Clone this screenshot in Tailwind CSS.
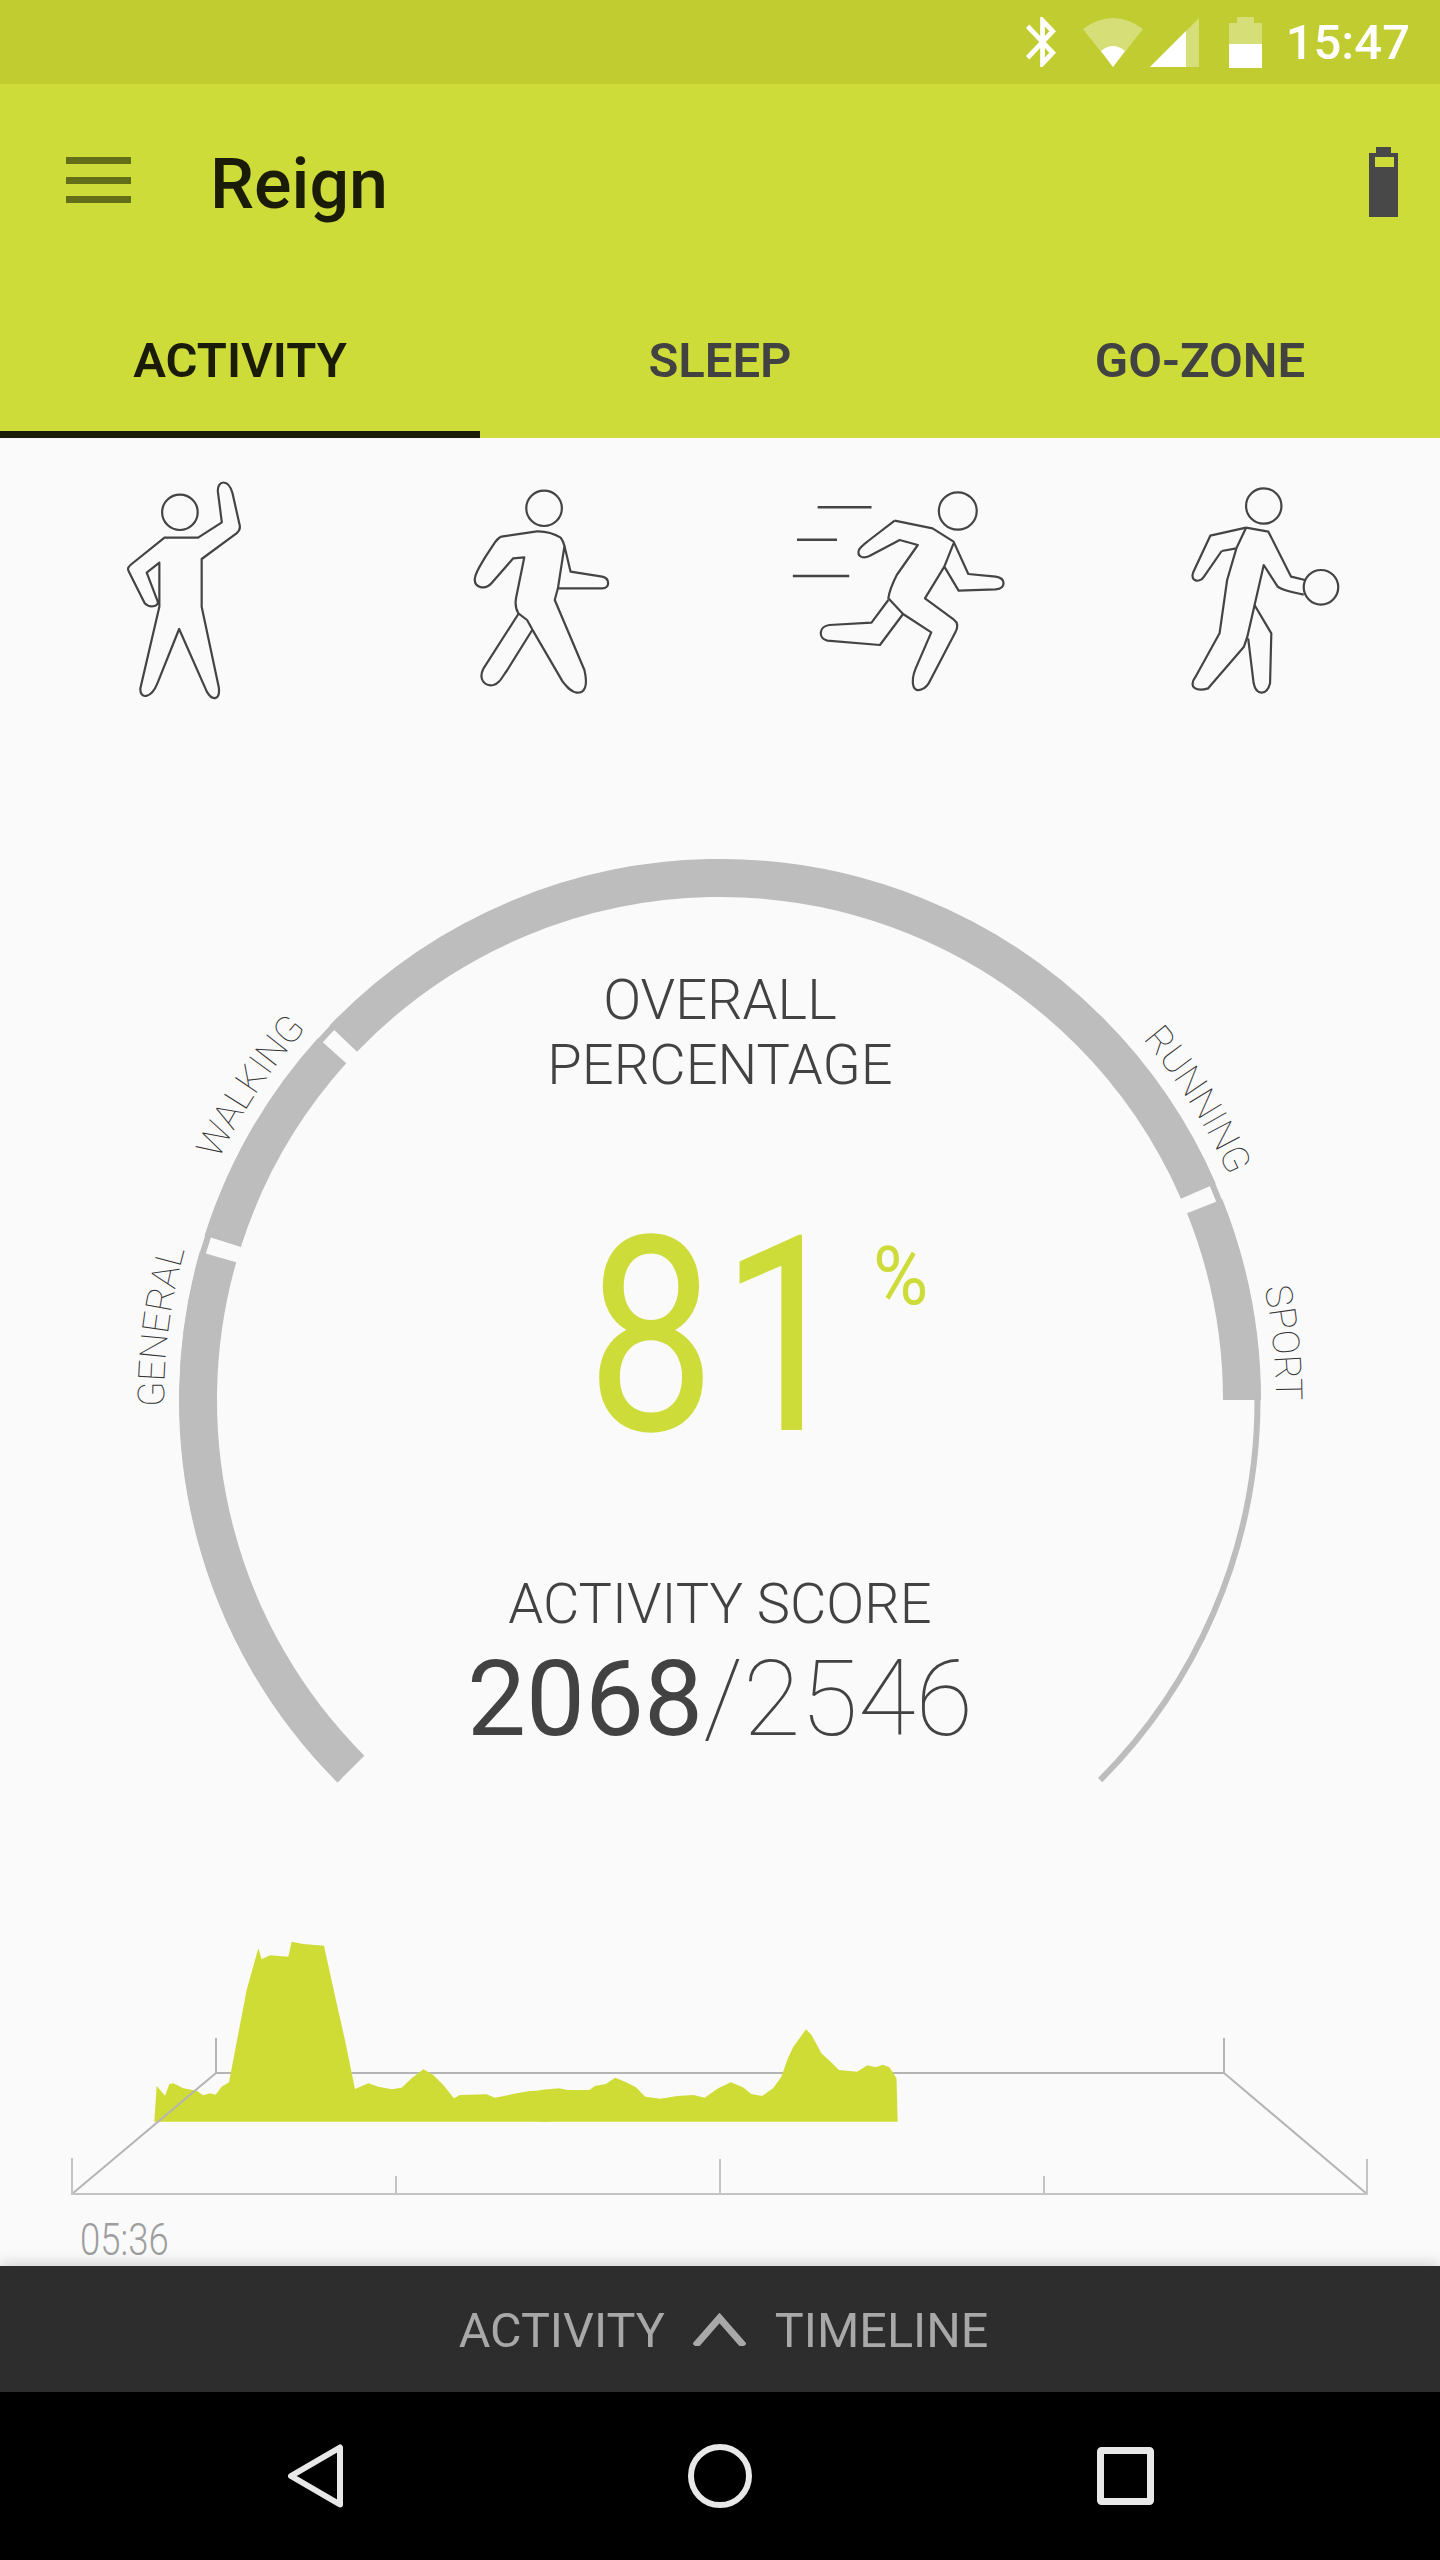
<!DOCTYPE html>
<html lang="en">
  <head>
    <meta charset="UTF-8" />
    <meta name="viewport" content="width=device-width, initial-scale=1.0" />
    <script src="https://cdn.jsdelivr.net/npm/@tailwindcss/browser@4"></script>
    <title>Reign</title>
  </head>
  <body class="bg-[#fafafa] font-['Roboto',sans-serif]">
    <div class="flex flex-col w-[1440px] h-[2560px] overflow-hidden">
      <!-- status bar -->
      <div class="h-[84px] bg-[#c1cc31] flex items-center justify-end pr-[30px] text-white">
        <svg class="w-[30px] h-[50px] fill-white" viewBox="5 2 12.71 20" preserveAspectRatio="none">
          <path d="M17.71 7.71L12 2h-1v7.59L6.41 5 5 6.41 10.59 12 5 17.59 6.41 19 11 14.41V22h1l5.71-5.71-4.3-4.29 4.3-4.29zM13 5.83l1.88 1.88L13 9.59V5.83zm1.88 10.46L13 18.17v-3.76l1.88 1.88z" />
        </svg>
        <svg class="w-[60px] h-[49px] ml-[27px]" viewBox="0 0 60 49">
          <path d="M30 49L0 11Q30 -11 60 11Z" fill="#fff" fill-opacity="0.35" />
          <path d="M30 49L18 33Q30 23 42 33Z" fill="#fff" />
        </svg>
        <svg class="w-[49px] h-[49px] ml-[7px]" viewBox="0 0 49 49">
          <path d="M49 0V49H0Z" fill="#fff" fill-opacity="0.35" />
          <path d="M0 49L36 13V49Z" fill="#fff" />
        </svg>
        <svg class="w-[33px] h-[51px] ml-[30px]" viewBox="0 0 33 51">
          <path d="M8 0H25V6H33V27H0V6H8Z" fill="#fff" fill-opacity="0.35" />
          <rect y="27" width="33" height="24" fill="#fff" />
        </svg>
        <span class="ml-[24px] text-[49px] leading-none font-medium">15:47</span>
      </div>

      <!-- toolbar -->
      <div class="h-[200px] bg-[#cddc39] flex items-center pl-[66px] pr-[42px]">
        <div class="w-[65px] h-[46px] mb-[8px] flex flex-col justify-between">
          <div class="h-[7px] bg-[#636e18]"></div>
          <div class="h-[7px] bg-[#636e18]"></div>
          <div class="h-[7px] bg-[#636e18]"></div>
        </div>
        <span class="ml-[79px] text-[70px] leading-none font-medium text-[#1b1c08]">Reign</span>
        <svg class="ml-auto mb-[4px] w-[29px] h-[70px]" viewBox="0 0 29 70">
          <path d="M7 0H22V6H29V70H0V6H7Z" fill="#484848" />
          <rect x="6" y="10" width="19" height="10" fill="#cddc39" />
        </svg>
      </div>

      <!-- tabs -->
      <div class="h-[154px] bg-[#cddc39] grid grid-cols-3 text-[49px] font-semibold">
        <div class="flex items-center justify-center pt-[7px] border-b-[7px] border-[#1a1c08] text-[#1a1c08]">ACTIVITY</div>
        <div class="flex items-center justify-center pt-[7px] border-b-[7px] border-transparent text-[#424242]">SLEEP</div>
        <div class="flex items-center justify-center pt-[7px] border-b-[7px] border-transparent text-[#424242]">GO-ZONE</div>
      </div>

      <!-- activity type icons -->
      <div class="grid grid-cols-4 pt-[22px]">
        <svg class="w-[360px] h-[260px] fill-none stroke-[#444] [&>*]:[vector-effect:non-scaling-stroke]" stroke-width="2.2" stroke-linejoin="round" viewBox="-253 0 910.4 780" preserveAspectRatio="none">
          <ellipse cx="202" cy="157" rx="45" ry="53" />
          <path d="M163 233H248L308 187L298 95C296 60 325 55 335 100L353 195C356 210 350 215 345 220L257 297V440L300 680C305 720 285 725 270 695L200 507L145 670C130 715 100 720 102 685L150 440V308L118 338L146 425C148 440 125 445 113 430L73 335C68 325 72 320 80 312Z" />
        </svg>
        <svg class="w-[360px] h-[260px] fill-none stroke-[#444] [&>*]:[vector-effect:non-scaling-stroke]" stroke-width="2.2" stroke-linejoin="round" viewBox="657.5 0 910.4 780" preserveAspectRatio="none">
          <ellipse cx="1123" cy="145" rx="45" ry="53" />
          <path d="M1015 230L1105 214C1130 213 1150 222 1165 233C1172 245 1175 258 1177 270L1190 335L1270 350C1290 355 1290 385 1270 385H1158M1175 255L1158 385L1150 420L1225 630C1235 680 1225 700 1205 698C1190 695 1180 680 1170 665L1093 508L1080 480L1058 460C1050 445 1050 430 1052 415L1073 292L1045 295L990 370C975 390 945 385 948 355C950 335 960 320 975 290L1000 245C1005 238 1010 232 1015 230" />
          <path d="M1058 462L970 625C955 660 975 680 995 675C1010 670 1015 655 1030 630L1093 510" />
        </svg>
        <svg class="w-[360px] h-[260px] fill-none stroke-[#444] [&>*]:[vector-effect:non-scaling-stroke]" stroke-width="2.2" stroke-linejoin="round" viewBox="0 0 855.4 780" preserveAspectRatio="none">
          <ellipse cx="565" cy="153" rx="45" ry="56" />
          <path d="M232 142H360M183 239H278M173 348H307" stroke-width="2.5" />
          <path d="M415 182L505 205L555 245L590 342L655 350C680 355 680 385 655 388L567 392L533 320M555 250L533 320L487 415L555 478C568 490 565 505 558 520L500 660C490 690 465 700 460 680C455 660 460 640 465 625L502 517L435 462L400 415C402 395 410 370 420 345L470 255L427 240L355 288C340 297 325 290 330 270C335 258 345 250 355 240L415 182" />
          <path d="M400 420L360 488L260 495C235 498 232 535 255 542L380 555L435 462" />
        </svg>
        <svg class="w-[360px] h-[260px] fill-none stroke-[#444] [&>*]:[vector-effect:non-scaling-stroke]" stroke-width="2.2" stroke-linejoin="round" viewBox="855.4 0 855.4 780" preserveAspectRatio="none">
          <ellipse cx="1292" cy="138" rx="42" ry="53" />
          <ellipse cx="1428" cy="382" rx="41" ry="52" />
          <path d="M1192 273L1227 265M1250 203L1165 227L1125 335C1115 365 1140 370 1150 350L1192 273" />
          <path d="M1250 203L1227 265L1205 360L1187 520L1130 650C1110 685 1135 695 1160 685L1245 560L1253 530L1292 315L1325 380C1335 390 1360 397 1387 404M1250 203L1303 215L1357 350L1390 360" />
          <path d="M1270 435L1310 520L1307 670C1300 705 1275 710 1268 670L1255 535" />
        </svg>
      </div>

      <!-- gauge -->
      <div class="relative h-[1180px] flex flex-col items-center pt-[248px] text-[#424242]">
        <svg class="absolute left-0 top-0 w-[1440px] h-[1180px]" viewBox="0 720 1440 1180">
          <path d="M339.9 1780.1A537.5 537.5 0 1 1 1100.1 1780.1" fill="none" stroke="#bdbdbd" stroke-width="6" />
          <path d="M350.9 1769.1A522 522 0 1 1 1242 1400" fill="none" stroke="#bdbdbd" stroke-width="38" pathLength="225" stroke-dasharray="60.9 1.8 24.3 1.8 112.6 1.8 21.8 10" />
          <path id="labels" d="M172.4 1496.5A556 556 0 1 1 1267.6 1496.5" fill="none" />
          <g class="fill-[#333] font-thin text-[37px]">
            <text><textPath href="#labels" startOffset="90">GENERAL</textPath></text>
            <text><textPath href="#labels" startOffset="345">WALKING</textPath></text>
            <text><textPath href="#labels" startOffset="1450">RUNNING</textPath></text>
            <text><textPath href="#labels" startOffset="1730">SPORT</textPath></text>
          </g>
        </svg>
        <div class="relative text-center text-[56px] leading-[65px] font-light">OVERALL<br />PERCENTAGE</div>
        <div class="relative mt-[103px] text-[273px] leading-[273px] font-normal text-[#cddc39]">
          <span class="inline-block scale-x-[0.84] tracking-[6px]">81</span>
          <span class="absolute left-[312px] top-[34px] origin-left scale-x-[0.92] text-[82px] leading-none font-normal">%</span>
        </div>
        <div class="relative mt-[95px] text-[56px] leading-[70px] font-light">ACTIVITY SCORE</div>
        <div class="relative mt-[8px] text-[105px] leading-[105px] whitespace-nowrap"><span class="font-normal">2068</span><span class="font-thin">/2546</span></div>
      </div>

      <!-- timeline chart -->
      <svg class="w-[1440px] h-[310px]" viewBox="0 1900 1440 310">
        <g fill="none" stroke="#b4b4b4" stroke-width="2">
          <path d="M216 2038V2073H1224V2038" />
        </g>
        <path transform="translate(50 1900) scale(0.3333)" fill="#cfdc35" d="M313 665L320 557L345 587L358 553L370 550L400 565L440 572L460 586L480 580L497 584L515 560L537 547L590 270L625 145L635 178L660 166L715 170L725 125L760 132L822 137L860 310L885 420L915 567L955 550L985 560L1025 568L1055 563L1085 535L1120 508L1150 525L1180 555L1212 595L1230 585L1310 583L1335 593L1400 580L1440 573L1500 570V665Z" />
        <path transform="translate(540 1980) scale(0.5485 0.3333)" fill="#cfdc35" d="M0 425V330L35 325L50 330L90 330L100 318L120 312L137 293L155 305L175 322L192 350L220 356L250 348L280 345L300 353L325 325L348 307L370 322L385 342L405 348L425 325L440 290L452 235L462 200L485 148L495 165L513 220L530 245L545 270L578 275L597 256L612 262L625 254L637 262L650 295L652 425Z" />
        <path d="M72 2194L216 2073M1224 2073L1367 2194" fill="none" stroke="#b4b4b4" stroke-width="2" />
        <path d="M72 2158V2194H1367V2159M396 2194V2176M720 2194V2159M1044 2194V2176" fill="none" stroke="#c4c4c4" stroke-width="2" />
      </svg>
      <div class="h-[56px] pl-[80px] pt-[2px] text-[44px] leading-[56px] font-light text-[#9e9e9e]">
        <span class="inline-block origin-left scale-x-[0.83]">05:36</span>
      </div>

      <!-- bottom sheet handle -->
      <div class="relative h-[126px] bg-[#2d2d2d] flex items-center justify-center pl-[7px] pt-[5px] text-[48.5px] text-[#a8a8a8] shadow-[0_-4px_12px_rgba(0,0,0,0.15)]">
        <span>ACTIVITY</span>
        <svg class="w-[53px] h-[33px] ml-[28px] mr-[29px] mb-[5px] fill-none stroke-[#a8a8a8]" stroke-width="7" viewBox="0 0 53 33">
          <path d="M2 33L26.5 5L51 33" />
        </svg>
        <span>TIMELINE</span>
      </div>

      <!-- android nav -->
      <div class="h-[168px] bg-black flex items-center justify-center gap-[345px]">
        <svg class="w-[56px] h-[64px] fill-none stroke-[#e8e8e8]" stroke-width="6" stroke-linejoin="round" viewBox="0 0 56 64">
          <path d="M53 3.5V60.5L4 32Z" />
        </svg>
        <svg class="w-[64px] h-[64px] fill-none stroke-[#e8e8e8]" stroke-width="6" viewBox="0 0 64 64">
          <circle cx="32" cy="32" r="29" />
        </svg>
        <svg class="w-[57px] h-[58px] fill-none stroke-[#e8e8e8]" stroke-width="7" viewBox="0 0 57 58">
          <rect x="3.5" y="3.5" width="50" height="51" rx="1" />
        </svg>
      </div>
    </div>
  </body>
</html>
